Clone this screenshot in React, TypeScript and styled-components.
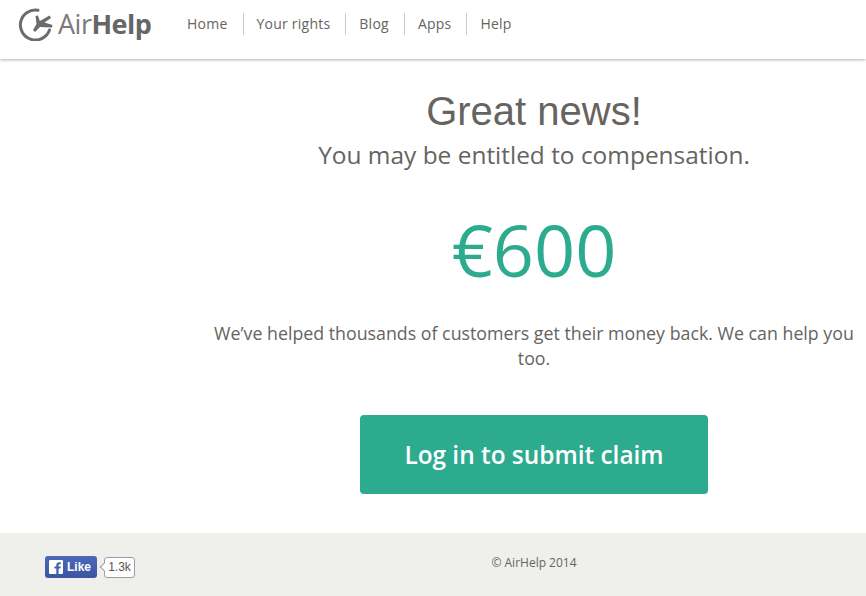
import React from "react";
import styled, { createGlobalStyle } from "styled-components";

const Global = createGlobalStyle`
  html, body { margin: 0; padding: 0; background: #fff; }
  body { font-family: "Open Sans", sans-serif; color: #666461; overflow: hidden; }
`;
const Page = styled.div`
  width: 866px; height: 596px; display: flex; flex-direction: column; overflow: hidden;
`;
const Header = styled.header`
  height: 59px; flex: none; display: flex; align-items: flex-start; background: #fff;
  box-shadow: 0 1px 3px rgba(0,0,0,.3); position: relative; z-index: 1;
`;
const Logo = styled.div`
  display: flex; align-items: center; margin: 7px 0 0 18px; width: 169px; height: 34px; color: #6b6b6b;
`;
const LogoText = styled.span`
  font-family: "Open Sans", sans-serif; font-size: 27px; letter-spacing: -0.5px; margin-left: 2px; color: #7a7a7a; line-height: 34px;
  & b { font-weight: 700; color: #666; }
`;
const Nav = styled.nav`
  display: flex; margin-top: 13px;
`;
const NavLink = styled.a`
  font-size: 14px; line-height: 22px; letter-spacing: 0.23px; color: #666461; padding: 0 15px 0 13px;
  border-left: ${p => (p.$first ? "none" : "1px solid #ccc")};
  ${p => p.$first && "padding-left: 0;"}
`;
const Main = styled.main`
  flex: 1; padding-left: 202px; display: flex; flex-direction: column; align-items: center; text-align: center;
`;
const Title = styled.h1`
  margin: 29px 0 0; font: 400 40px/46px "Liberation Sans", Arial, sans-serif; color: #666461;
`;
const Subtitle = styled.p`
  margin: 1px 0 0; font-size: 24.45px; line-height: 40px; color: #666461;
`;
const Amount = styled.div`
  margin-top: 25px; font-size: 72px; line-height: 98px; color: #2dab8f;
`;
const Body = styled.p`
  margin: 23px 0 0; font-size: 17.8px; line-height: 25px; color: #666461; width: 663px;
`;
const Cta = styled.button`
  margin-top: 44px; width: 348px; height: 79px; border: none; border-radius: 4px; background: #2dab8f; color: #fff;
  font: 600 24.4px "Open Sans", sans-serif; padding: 0;
`;
const Footer = styled.footer`
  height: 63px; flex: none; background: #efefeb; position: relative; display: flex; justify-content: center; padding-left: 202px;
`;
const Copy = styled.div`
  font-size: 12px; line-height: 16px; margin-top: 22px; color: #666461;
`;
const LikeWrap = styled.div`
  position: absolute; left: 45px; top: 23px; display: flex; align-items: center;
`;
const LikeBtn = styled.div`
  width: 52px; height: 22px; box-sizing: border-box; border-radius: 3px; background: linear-gradient(#4c69ba, #3b55a0);
  display: flex; align-items: center; padding-left: 4px; gap: 4px; color: #fff;
  font: 700 12px "Liberation Sans", Arial, sans-serif;
`;
const FbBox = styled.svg`
  width: 14px; height: 14px; display: block;
`;
const Count = styled.div`
  margin-left: 7px; width: 31px; height: 21px; box-sizing: border-box; background: #fff; border: 1px solid #9a9ba5; border-radius: 3px;
  font: 400 12px/19px "Liberation Sans", Arial, sans-serif; color: #555; text-align: center; position: relative;
  &::before {
    content: ""; position: absolute; left: -4px; top: 6px; width: 5px; height: 5px; background: #fff;
    border-left: 1px solid #9a9ba5; border-bottom: 1px solid #9a9ba5; transform: rotate(45deg);
  }
`;

export default function App() {
  return (
    <Page>
      <Global />
      <Header>
        <Logo>
          <svg width="38" height="34" viewBox="0 0 38 34" fill="none">
            <path d="M20 3.200A15 15 0 1 0 31.500 23" stroke="#6b6b6b" strokeWidth="3" strokeLinecap="round" />
            <path d="M17.500 9 L20 8.500 L21.800 14 L31.500 8.500 L33 11 L26.500 15.500 L34.500 18 L34 20.500 L22 20 L17 25 L15 23 L18.500 17 Z" fill="#6b6b6b" />
          </svg>
          <LogoText>Air<b>Help</b></LogoText>
        </Logo>
        <Nav>
          <NavLink $first>Home</NavLink>
          <NavLink>Your rights</NavLink>
          <NavLink>Blog</NavLink>
          <NavLink>Apps</NavLink>
          <NavLink>Help</NavLink>
        </Nav>
      </Header>
      <Main>
        <Title>Great news!</Title>
        <Subtitle>You may be entitled to compensation.</Subtitle>
        <Amount>€600</Amount>
        <Body>We’ve helped thousands of customers get their money back. We can help you too.</Body>
        <Cta>Log in to submit claim</Cta>
      </Main>
      <Footer>
        <LikeWrap>
          <LikeBtn>
            <FbBox viewBox="0 0 14 14">
              <rect width="14" height="14" rx="1" fill="#fff" />
              <path d="M9.6 14V8.6h1.8l.3-2.1H9.6V5.2c0-.6.2-1 1-1h1.2V2.3c-.2 0-.9-.1-1.7-.1-1.700 0-2.800 1-2.800 2.900v1.400H5.400v2.100h1.900V14z" fill="#4661ad" />
            </FbBox>
            Like
          </LikeBtn>
          <Count>1.3k</Count>
        </LikeWrap>
        <Copy>© AirHelp 2014</Copy>
      </Footer>
    </Page>
  );
}
